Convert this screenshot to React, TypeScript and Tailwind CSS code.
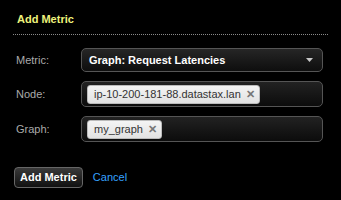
import React from 'react';

const Tag: React.FC<{ label: string }> = ({ label }) => (
  <span className="inline-flex items-center h-[19px] pl-[6px] pr-[4px] rounded-[3px] bg-gradient-to-b from-[#f4f4f4] to-[#e2e2e2] border border-[#bbb] text-[#333] text-[11px] leading-none">
    {label}
    <span className="ml-[5px] text-[#777] text-[11px] font-bold leading-none">✕</span>
  </span>
);

export default function App() {
  return (
    <div className="w-[341px] h-[200px] bg-black font-['Liberation_Sans',Arial,sans-serif] overflow-hidden">
      <div className="px-[13px] pt-[12px]">
        <h2 className="pl-[4px] text-[11px] font-bold text-[#eef27c] leading-[14px]">Add Metric</h2>
        <div className="mt-[8px] border-t border-dotted border-[#8a8a8a]" />

        <div className="mt-[13px] flex flex-col gap-[9px]">
          <div className="flex items-center">
            <span className="w-[68px] pl-[3px] text-[11px] text-[#aaa]">Metric:</span>
            <div className="flex-1 mr-[5px] h-[24px] flex items-center justify-between px-[7px] rounded-[5px] border border-[#555] bg-gradient-to-b from-[#262626] to-[#0e0e0e]">
              <span className="text-[11px] font-bold text-white">Graph: Request Latencies</span>
              <svg width="7" height="4" viewBox="0 0 7 4" className="mr-[2px]">
                <polygon points="0,0 7,0 3.5,4" fill="#c8c8c8" />
              </svg>
            </div>
          </div>

          <div className="flex items-center">
            <span className="w-[68px] pl-[3px] text-[11px] text-[#aaa]">Node:</span>
            <div className="flex-1 mr-[5px] h-[26px] flex items-center px-[5px] rounded-[5px] border border-[#555] bg-gradient-to-b from-[#222] to-[#0c0c0c]">
              <Tag label="ip-10-200-181-88.datastax.lan" />
            </div>
          </div>

          <div className="flex items-center">
            <span className="w-[68px] pl-[3px] text-[11px] text-[#aaa]">Graph:</span>
            <div className="flex-1 mr-[5px] h-[26px] flex items-center px-[5px] rounded-[5px] border border-[#555] bg-gradient-to-b from-[#222] to-[#0c0c0c]">
              <Tag label="my_graph" />
            </div>
          </div>
        </div>

        <div className="mt-[25px] flex items-center gap-[10px] pl-[1px]">
          <button className="h-[21px] px-[5px] rounded-[4px] border border-[#666] bg-gradient-to-b from-[#3a3a3a] to-[#111] text-white text-[11px] font-bold">
            Add Metric
          </button>
          <a className="text-[11px] text-[#36a2ff]">Cancel</a>
        </div>
      </div>
    </div>
  );
}
